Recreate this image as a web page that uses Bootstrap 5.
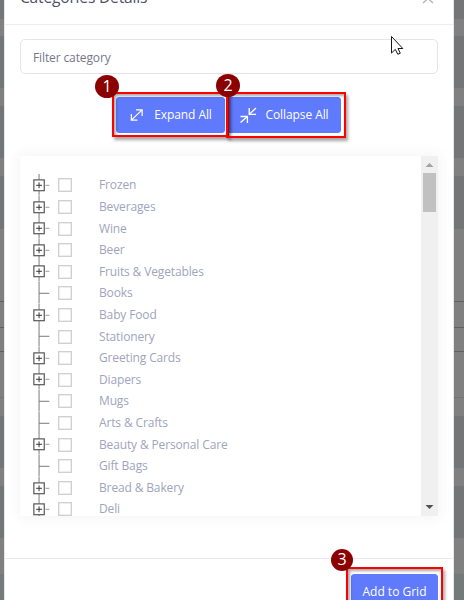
<!DOCTYPE html>
<html lang="en">
<head>
<meta charset="utf-8">
<meta name="viewport" content="width=device-width, initial-scale=1">
<title>Categories Details</title>
<link href="https://cdn.jsdelivr.net/npm/bootstrap@5.3.0/dist/css/bootstrap.min.css" rel="stylesheet">
<style>
body{width:464px;height:600px;font-family:"Open Sans",sans-serif;font-size:12px;line-height:18px;padding:0 10px 0 4px;
background:linear-gradient(#737577 19px,#808080 19px 36px,#737577 36px 88px,#808080 88px 106px,#737577 106px 158px,#808080 158px 176px,#737577 176px 229px,#808080 229px 301px,#606060 301px 302px,#808080 302px 327px,#606060 327px 328px,#808080 328px 351px,#606060 351px 352px,#808080 352px 397px,#747474 397px 398px,#808080 398px 416px,#737577 416px 468px,#808080 468px 486px,#737577 486px 538px,#808080 538px 574px,#747a7a 574px)}
.dialog-box{height:600px;border:solid #e6e7f0;border-width:0 1px}
.dialog-head{height:25px;border-bottom:1px solid #ebedf2;padding:0 15px}
.dialog-title{font-size:15.6px;line-height:22px;margin-top:-14px;color:#50506a;letter-spacing:-.2px}
.close-x{margin:-7px 4px 0 0}
.dialog-main{height:533px;padding:14px 15px 0}
.filter-box{height:35px;border:1px solid #e2e5ec;border-radius:5px;padding:2px 12px 0;font-size:12px;letter-spacing:-.12px;color:#74788d;background:#fff;box-shadow:none}
.filter-box::placeholder{color:#74788d;opacity:1}
.tool-row{height:36px;margin:23px 0;padding-left:96px;gap:2px}
.btn-tool{--bs-btn-bg:#5f7afc;--bs-btn-color:#fff;--bs-btn-border-color:#5f7afc;--bs-btn-border-radius:3px;--bs-btn-font-size:12px;--bs-btn-padding-x:0;--bs-btn-padding-y:0;height:36px;line-height:18px;letter-spacing:-.08px}
.tool-icon{margin-right:10px}
.tool-expand{width:109px}.tool-collapse{width:114px}
.tree-panel{height:360px;border-radius:3px;box-shadow:0 0 13px 2px rgba(70,70,90,.055)}
.tree-list{padding:18px 0 0 13px;color:#a0a4bd;letter-spacing:-.14px}
.tree-row{height:21.62px}
.node-mark{width:19px;height:21.62px;display:block}
.tick{width:14px;height:14px;border:1px solid #d0d0d0;box-shadow:inset 0 0 0 .5px #dedede;margin:1px 27px 0 6px}
.row-name{padding-top:1px}
.scroll-track{width:17px;background:#f0f0f0}
.scroll-thumb{width:13px;height:39px;background:#c1c1c1}
.dialog-foot{height:42px;border-top:1px solid #e8e9f2;padding:15px 15px 0}
.tool-add{width:87px;letter-spacing:0}
.frame{border:2px solid #f00;box-shadow:2px 3px 3px rgba(0,0,0,.35),inset 2px 2px 3px rgba(0,0,0,.35);pointer-events:none}
.frame-1{left:112px;top:92px;width:117px;height:45px}
.frame-2{left:226px;top:92px;width:120px;height:46px}
.frame-3{left:346px;top:567px;width:97px;height:45px}
.num{width:24px;height:23px;border-radius:50%;background:#8b0000;color:#fff;font:16px/22px "Open Sans",sans-serif;text-align:center}
.num-1{left:95px;top:75px}.num-2{left:216px;top:74px}.num-3{left:331px;top:549px;width:22px;height:22px;line-height:21px}
.pointer{left:391px;top:36px}
</style>
<script src="https://cdn.jsdelivr.net/npm/bootstrap@5.3.0/dist/js/bootstrap.bundle.min.js"></script>
</head>
<body class="position-relative overflow-hidden">
<div class="dialog-box bg-white d-flex flex-column overflow-hidden">
  <header class="dialog-head d-flex justify-content-between align-items-start">
    <h5 class="dialog-title fw-normal mb-0">Categories Details</h5>
    <svg class="close-x" width="12" height="12" viewBox="0 0 12 12" fill="none" stroke="#b5b7c8" stroke-width="1.5"><path d="M1 1 11 10M11 1 1 10"/></svg>
  </header>
  <main class="dialog-main">
    <input class="form-control filter-box" placeholder="Filter category">
    <div class="tool-row d-flex">
      <button class="btn btn-tool tool-expand d-flex align-items-center justify-content-center"><svg class="tool-icon" width="15" height="16" viewBox="0 0 16 16" fill="none" stroke="#fff" stroke-width="1.3"><path d="M2.5 13.5 14 2.5M7.5 2.5H14V9M2.5 7V13.5H9"/></svg><span>Expand All</span></button>
      <button class="btn btn-tool tool-collapse d-flex align-items-center justify-content-center"><svg class="me-2" width="18" height="16" viewBox="0 0 18 16" fill="none" stroke="#fff" stroke-width="1.3"><path d="M10.2 1V7.4H17M10.2 7.4 17 1M1.5 9.5H8.4V16M8.4 9.5 1.5 15.5"/></svg><span>Collapse All</span></button>
    </div>
    <div class="tree-panel d-flex justify-content-between">
      <div class="tree-list h-100 overflow-hidden flex-grow-1" id="tree"></div>
      <div class="scroll-track d-flex flex-column align-items-center">
        <svg width="17" height="17"><path d="M4.5 11 8.5 7 12.5 11Z" fill="#a3a3a3"/></svg>
        <div class="scroll-thumb"></div>
        <svg class="mt-auto" width="17" height="17"><path d="M4.5 6 8.5 10 12.5 6Z" fill="#505050"/></svg>
      </div>
    </div>
  </main>
  <footer class="dialog-foot d-flex justify-content-end align-items-start">
    <button class="btn btn-tool tool-add">Add to Grid</button>
  </footer>
</div>
<div class="frame frame-1 position-absolute"></div>
<div class="frame frame-2 position-absolute"></div>
<div class="frame frame-3 position-absolute"></div>
<div class="num num-1 position-absolute">1</div>
<div class="num num-2 position-absolute">2</div>
<div class="num num-3 position-absolute">3</div>
<svg class="pointer position-absolute" width="14" height="20" viewBox="0 0 14 20"><path d="M.5.5V17L4.3 13.4 6.8 18.3 9.3 17.2 7 12.5H11.8Z" fill="#fff" stroke="#15151f" stroke-width="1"/></svg>
<script>
// A leading "+" marks a category that has children.
const names = ["+Frozen","+Beverages","+Wine","+Beer","+Fruits & Vegetables","Books","+Baby Food","Stationery","+Greeting Cards","+Diapers","Mugs","Arts & Crafts","+Beauty & Personal Care","Gift Bags","+Bread & Bakery","+Deli"];
const box = '<path d="M6 0V22" stroke="#777"/><rect x=".7" y="6" width="10.6" height="11" fill="#fff" stroke="#555" stroke-width="1.2"/><path d="M3 11.5H9M6 8.5V14.5" stroke="#333"/><path d="M12.5 11.5H16.5" stroke="#999"/>';
const leaf = '<path d="M6 0V22M6 11.5H16.5" stroke="#777"/>';
const tree = document.getElementById("tree");
names.forEach(n => {
  const parent = n[0] === "+";
  const row = document.createElement("div");
  row.className = "tree-row d-flex align-items-center";
  row.innerHTML = '<svg class="node-mark" viewBox="0 0 19 22" fill="none">' + (parent ? box : leaf) + '</svg><span class="tick"></span><span class="row-name"></span>';
  row.lastChild.textContent = parent ? n.slice(1) : n;
  tree.append(row);
});
</script>
</body>
</html>
